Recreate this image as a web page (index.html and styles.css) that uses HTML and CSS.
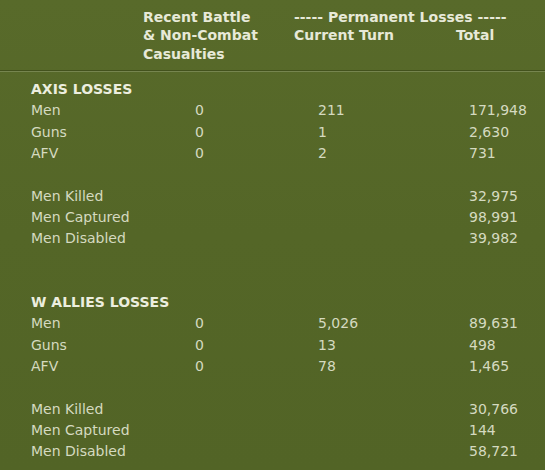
FILE: index.html
```html
<!DOCTYPE html>
<html>
<head>
<meta charset="utf-8">
<link rel="stylesheet" href="styles.css">
</head>
<body>
<div class="panel">
  <div class="head">
    <div class="head-col recent">
      <div>Recent Battle</div>
      <div>&amp; Non-Combat</div>
      <div>Casualties</div>
    </div>
    <div class="head-col perm">
      <div>----- Permanent Losses -----</div>
      <div class="perm-sub"><span class="cur">Current Turn</span><span>Total</span></div>
    </div>
  </div>
  <div class="sep"></div>

  <section class="side">
    <div class="row title">AXIS LOSSES</div>
    <div class="row"><span>Men</span><span>0</span><span>211</span><span>171,948</span></div>
    <div class="row"><span>Guns</span><span>0</span><span>1</span><span>2,630</span></div>
    <div class="row"><span>AFV</span><span>0</span><span>2</span><span>731</span></div>
    <div class="row gap"><span>Men Killed</span><span></span><span></span><span>32,975</span></div>
    <div class="row"><span>Men Captured</span><span></span><span></span><span>98,991</span></div>
    <div class="row"><span>Men Disabled</span><span></span><span></span><span>39,982</span></div>
  </section>

  <section class="side second">
    <div class="row title">W ALLIES LOSSES</div>
    <div class="row"><span>Men</span><span>0</span><span>5,026</span><span>89,631</span></div>
    <div class="row"><span>Guns</span><span>0</span><span>13</span><span>498</span></div>
    <div class="row"><span>AFV</span><span>0</span><span>78</span><span>1,465</span></div>
    <div class="row gap"><span>Men Killed</span><span></span><span></span><span>30,766</span></div>
    <div class="row"><span>Men Captured</span><span></span><span></span><span>144</span></div>
    <div class="row"><span>Men Disabled</span><span></span><span></span><span>58,721</span></div>
  </section>
</div>
</body>
</html>
```
FILE: styles.css
```css
html, body {
  margin: 0;
  padding: 0;
}
body {
  width: 545px;
  height: 470px;
  overflow: hidden;
  background: linear-gradient(180deg, #586a2a 0%, #546627 50%, #526426 100%);
  font-family: "DejaVu Sans", Verdana, sans-serif;
  font-size: 14px;
  color: #d5dac0;
}
.panel {
  display: flex;
  flex-direction: column;
}
.head {
  display: flex;
  padding: 7.5px 0 6.5px 143px;
  line-height: 18.7px;
  font-weight: bold;
  color: #e7e9d8;
}
.head-col.recent {
  width: 151px;
}
.perm-sub {
  display: flex;
}
.perm-sub .cur {
  width: 162px;
}
.sep {
  border-top: 1px solid #43521d;
  border-bottom: 1px solid #76854f;
}
.side {
  padding: 7px 0 0 31px;
  line-height: 21.3px;
}
.side.second {
  padding-top: 42.6px;
}
.row {
  display: grid;
  grid-template-columns: 164px 123px 151px 1fr;
  height: 21.3px;
  white-space: nowrap;
}
.row.title {
  display: block;
  font-weight: bold;
  color: #eceedf;
}
.row.gap {
  margin-top: 21.3px;
}
```
